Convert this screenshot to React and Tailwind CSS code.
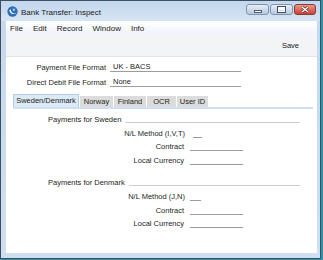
import React from "react";

const F = { fontFamily: '"Liberation Sans", Arial, sans-serif' };

function Row({ h, label, labelW, fieldMl, fieldW, value }) {
  return (
    <div className="flex items-end" style={{ height: h }}>
      <span className="text-right leading-[8px] text-[7.5px] text-[#1e1e1e] shrink-0" style={{ width: labelW }}>
        {label}
      </span>
      <span
        className="h-[9px] border-b border-[#9c9c9c] shrink-0 text-[7.5px] leading-[8px] text-[#1e1e1e] pl-[3px]"
        style={{ marginLeft: fieldMl, width: fieldW }}
      >
        {value}
      </span>
    </div>
  );
}

function Section({ h, title }) {
  return (
    <div className="flex items-end" style={{ height: h }}>
      <span className="ml-[42px] leading-[8px] text-[7.5px] text-[#1e1e1e] shrink-0">{title}</span>
      <span className="ml-[4px] flex-1 mr-[17px] border-b border-[#cfcfcf] mb-[1px]"></span>
    </div>
  );
}

export default function App() {
  return (
    <div className="w-[323px] h-[260px] bg-[#2a93ad]" style={F}>
      <div className="w-[321px] h-[259px] border border-[#3f4d5c] bg-gradient-to-b from-[#c5d8ee] to-[#cfdff1] flex flex-col">
        {/* title bar */}
        <div className="h-[20px] flex items-center shrink-0 bg-gradient-to-b from-[#c2d6ed] to-[#d6e4f4]">
          <svg width="11" height="11" viewBox="0 0 12 12" className="ml-[6px] mt-[1px]">
            <circle cx="6" cy="6" r="5.6" fill="#2f6db5" />
            <path d="M2.5 4.5 C3.5 9 8 10 10.5 7.5 C8 9 4.5 8 4 3.5 Z" fill="#ffffff" />
            <circle cx="7.5" cy="4" r="1.4" fill="#9cc6ee" />
          </svg>
          <span className="ml-[3px] text-[8px] leading-[9px] text-[#1a1a1a] mt-[2px]">Bank Transfer: Inspect</span>
          <div className="ml-auto mr-[4px] flex gap-[1px] mt-[-3px]">
            <div className="w-[23px] h-[11px] rounded-[3px] border border-[#7f93ab] bg-gradient-to-b from-[#e8eef6] to-[#b7c9de] flex items-center justify-center">
              <div className="w-[8px] h-[3px] bg-white border border-[#4b5e74] mt-[3px]"></div>
            </div>
            <div className="w-[23px] h-[11px] rounded-[3px] border border-[#7f93ab] bg-gradient-to-b from-[#e8eef6] to-[#b7c9de] flex items-center justify-center">
              <div className="w-[9px] h-[7px] border border-[#3d4f66] shadow-[inset_0_0_0_1px_#ffffff,inset_0_2px_0_1px_#ffffff]"></div>
            </div>
            <div className="w-[22px] h-[11px] rounded-[3px] border border-[#8a3a32] bg-gradient-to-b from-[#e8988c] to-[#c9402f] flex items-center justify-center">
              <svg width="8" height="7" viewBox="0 0 8 7">
                <path d="M1 1 L7 6 M7 1 L1 6" stroke="#5a1a14" strokeWidth="2.6" />
                <path d="M1 1 L7 6 M7 1 L1 6" stroke="#ffffff" strokeWidth="1.5" />
              </svg>
            </div>
          </div>
        </div>
        {/* inner */}
        <div className="flex-1 flex flex-col pl-[5px] pr-[3px] pb-[5px]">
          <div className="flex-1 flex flex-col bg-white">
            {/* menu */}
            <div className="h-[14px] shrink-0 flex items-center pl-[4px] gap-[10px] text-[8px] leading-[9px] text-[#1a1a1a] bg-gradient-to-b from-[#ffffff] to-[#eef3f9]">
              <span>File</span>
              <span>Edit</span>
              <span>Record</span>
              <span>Window</span>
              <span>Info</span>
            </div>
            {/* toolbar */}
            <div className="h-[22px] shrink-0 flex items-center justify-end pr-[18px] bg-[#f3f4f6] border-b border-[#dfe4ea]">
              <span className="text-[7.5px] leading-[8px] text-[#1a1a1a] mt-[1px]">Save</span>
            </div>
            {/* content */}
            <div className="flex flex-col">
              <Row h={15} label="Payment File Format" labelW={100} fieldMl={4} fieldW={131} value="UK - BACS" />
              <Row h={15} label="Direct Debit File Format" labelW={100} fieldMl={4} fieldW={131} value="None" />
              {/* tabs */}
              <div className="mt-[8px] ml-[7px] mr-[4px] flex items-end h-[14px] border-b-[2px] border-[#cfe0f2] gap-[1px] text-[7.5px] leading-[8px] text-[#1e1e1e]">
                <div className="h-[13px] w-[66px] flex items-center justify-center bg-[#dce9f6] border border-b-0 border-[#b3cbe4]">Sweden/Denmark</div>
                <div className="h-[11px] w-[33px] flex items-center justify-center bg-[#dcdcdc]">Norway</div>
                <div className="h-[11px] w-[32px] flex items-center justify-center bg-[#dcdcdc]">Finland</div>
                <div className="h-[11px] w-[29px] flex items-center justify-center bg-[#dcdcdc]">OCR</div>
                <div className="h-[11px] w-[31px] flex items-center justify-center bg-[#dcdcdc]">User ID</div>
              </div>
              <Section h={15} title="Payments for Sweden" />
              <Row h={14} label="N/L Method (I,V,T)" labelW={179} fieldMl={8} fieldW={9} />
              <Row h={13} label="Contract" labelW={178} fieldMl={6} fieldW={53} />
              <Row h={14} label="Local Currency" labelW={178} fieldMl={6} fieldW={53} />
              <Section h={22} title="Payments for Denmark" />
              <Row h={14} label="N/L Method (J,N)" labelW={179} fieldMl={5} fieldW={11} />
              <Row h={14} label="Contract" labelW={178} fieldMl={6} fieldW={53} />
              <Row h={13} label="Local Currency" labelW={178} fieldMl={6} fieldW={53} />
            </div>
          </div>
        </div>
      </div>
    </div>
  );
}
